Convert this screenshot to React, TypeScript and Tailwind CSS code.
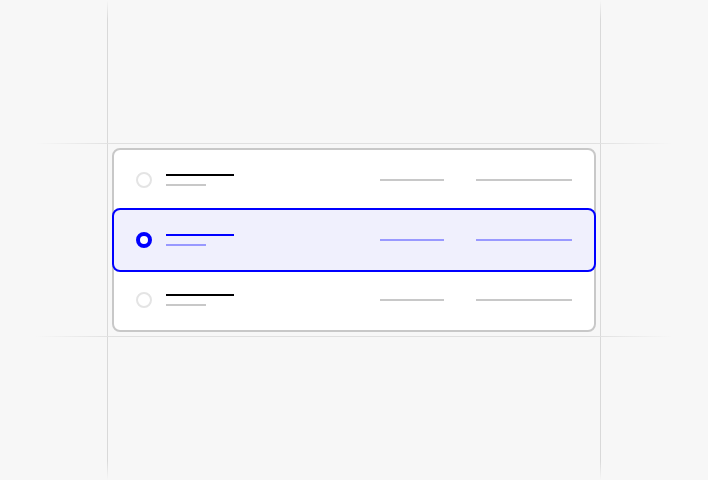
import React from "react";

function Row({ selected }: { selected?: boolean }) {
  return (
    <div className={"relative flex h-[60px] items-center " + (selected ? "bg-[#f0f0fd]" : "")}>
      {selected && (
        <div className="pointer-events-none absolute -inset-x-[2px] -inset-y-[2px] rounded-[8px] border-2 border-[#0000ff]" />
      )}
      <div className="ml-[22px] flex w-[16px] items-center justify-center">
        {selected ? (
          <div className="h-[16px] w-[16px] rounded-full border-[4px] border-[#0000ff] bg-white" />
        ) : (
          <div className="h-[16px] w-[16px] rounded-full border-2 border-[#e4e4e4] bg-white" />
        )}
      </div>
      <div className="ml-[14px] flex flex-col gap-[8px]">
        <div className={"h-[2px] w-[68px] " + (selected ? "bg-[#0000ff]" : "bg-black")} />
        <div className={"h-[2px] w-[40px] " + (selected ? "bg-[#9999ff]" : "bg-[#c8c8c8]")} />
      </div>
      <div className="ml-auto mr-[22px] flex items-center gap-[32px]">
        <div className={"h-[2px] w-[64px] " + (selected ? "bg-[#9999ff]" : "bg-[#c8c8c8]")} />
        <div className={"h-[2px] w-[96px] " + (selected ? "bg-[#9999ff]" : "bg-[#c8c8c8]")} />
      </div>
    </div>
  );
}

export default function App() {
  return (
    <div className="relative flex h-[480px] w-[708px] items-center justify-center overflow-hidden bg-[#f7f7f7]">
      <div className="relative w-[484px]">
        {/* guide lines */}
        <div className="pointer-events-none absolute left-[-5px] top-[-148px] h-[480px] w-px bg-[linear-gradient(to_bottom,transparent_0%,#d9d9d9_4%,#d9d9d9_96%,transparent_100%)]" />
        <div className="pointer-events-none absolute right-[-5px] top-[-148px] h-[480px] w-px bg-[linear-gradient(to_bottom,transparent_0%,#d9d9d9_4%,#d9d9d9_96%,transparent_100%)]" />
        <div className="pointer-events-none absolute left-[-112px] top-[-5px] h-px w-[708px] bg-[linear-gradient(to_right,transparent_5%,#e0e0e0_16%,#e0e0e0_84%,transparent_95%)]" />
        <div className="pointer-events-none absolute bottom-[-5px] left-[-112px] h-px w-[708px] bg-[linear-gradient(to_right,transparent_5%,#e0e0e0_16%,#e0e0e0_84%,transparent_95%)]" />
        <div className="relative rounded-[8px] border-2 border-[#c8c8c8] bg-white">
          <Row />
          <Row selected />
          <Row />
        </div>
      </div>
    </div>
  );
}
